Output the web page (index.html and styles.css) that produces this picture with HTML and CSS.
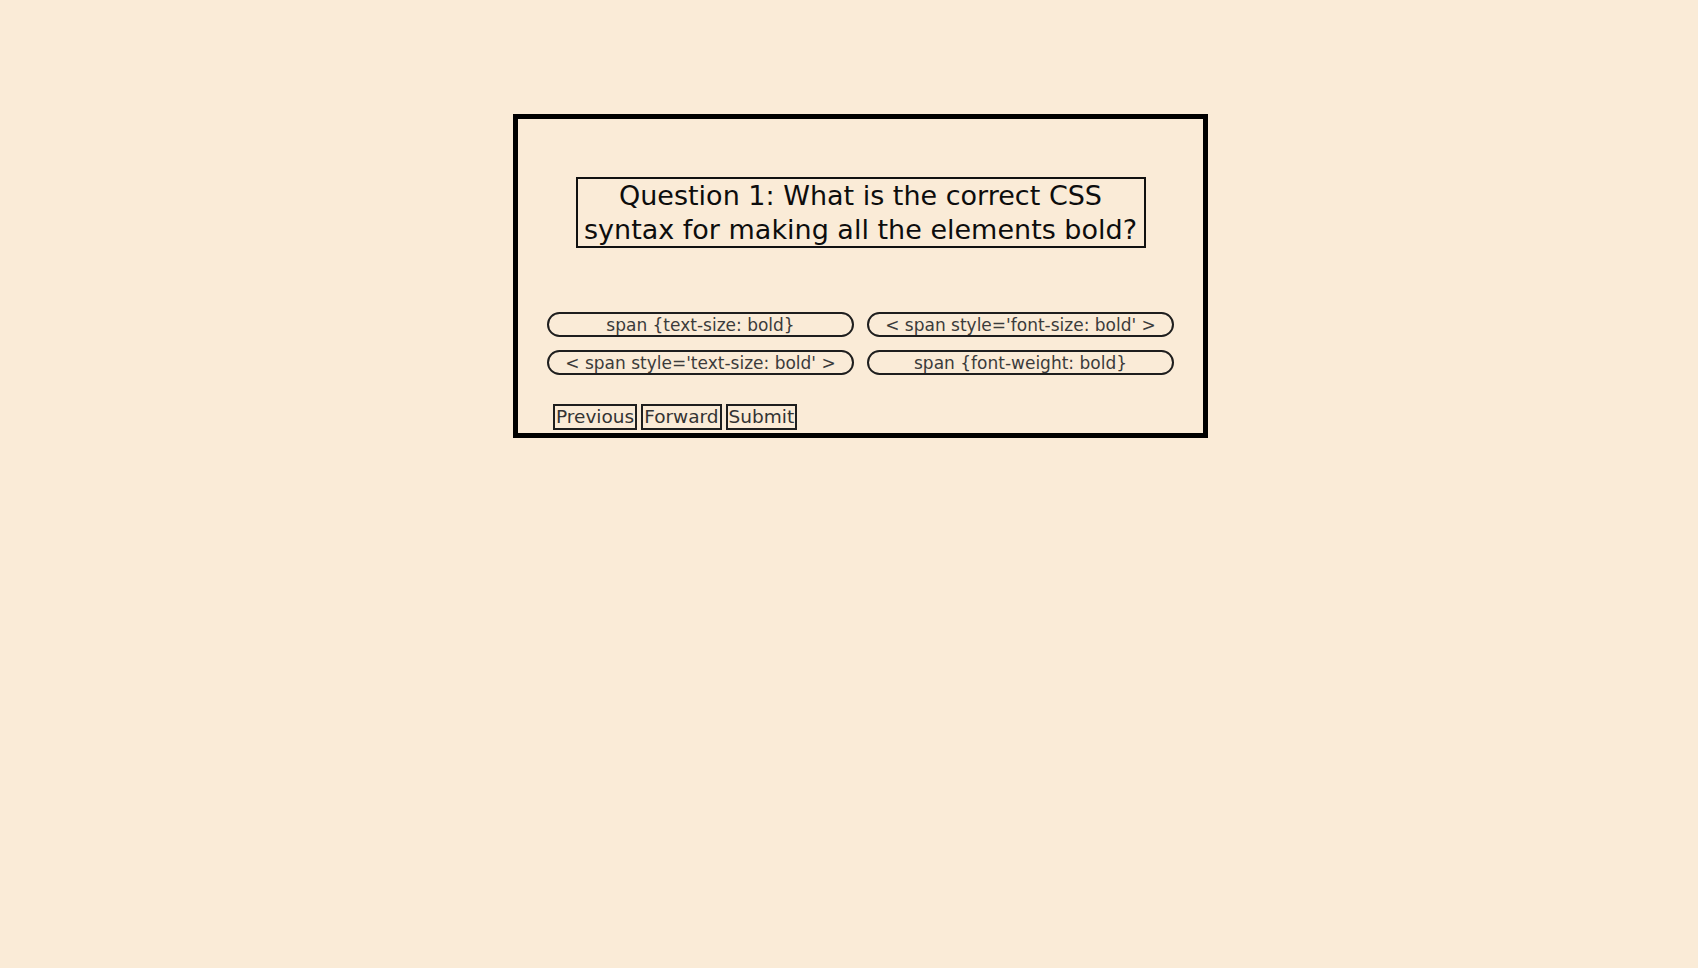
FILE: index.html
```html
<!DOCTYPE html>
<html lang="en">
<head>
<meta charset="utf-8">
<title>CSS Quiz</title>
<link rel="stylesheet" href="styles.css">
</head>
<body>
<div class="quiz">
  <h1 class="question">Question 1: What is the correct CSS<br>syntax for making all the elements bold?</h1>
  <div class="options">
    <button class="option">span {text-size: bold}</button>
    <button class="option">&lt; span style='font-size: bold' &gt;</button>
    <button class="option">&lt; span style='text-size: bold' &gt;</button>
    <button class="option">span {font-weight: bold}</button>
  </div>
  <div class="nav">
    <button class="nav-btn">Previous</button>
    <button class="nav-btn">Forward</button>
    <button class="nav-btn">Submit</button>
  </div>
</div>
</body>
</html>
```
FILE: styles.css
```css
html, body {
  margin: 0;
  padding: 0;
  background: #faebd7;
}
body {
  font-family: "DejaVu Sans", sans-serif;
}
.quiz {
  box-sizing: border-box;
  width: 695px;
  margin: 114px 0 0 513px;
  border: 5px solid #000;
  padding: 58px 0 3px 0;
  display: flex;
  flex-direction: column;
}
.question {
  box-sizing: border-box;
  width: 570px;
  margin: 0 auto;
  border: 2px solid #111;
  font-size: 27px;
  font-weight: 400;
  line-height: 33.5px;
  text-align: center;
  color: #0d0d0d;
  white-space: nowrap;
}
.options {
  margin: 64px 29px 0 29px;
  display: grid;
  grid-template-columns: 1fr 1fr;
  column-gap: 13px;
  row-gap: 13px;
}
.option {
  box-sizing: border-box;
  height: 25px;
  border: 2px solid #1e1e1e;
  border-radius: 13px;
  background: transparent;
  font-family: "DejaVu Sans", sans-serif;
  font-size: 17px;
  color: #3b3b3b;
  padding: 0;
  line-height: 20px;
}
.nav {
  margin: 29px 0 0 35px;
  display: flex;
  gap: 4px;
}
.nav-btn {
  box-sizing: border-box;
  height: 26px;
  border: 2px solid #1e1e1e;
  background: transparent;
  font-family: "DejaVu Sans", sans-serif;
  font-size: 18.5px;
  color: #333;
  padding: 0 1px;
  line-height: 22px;
}
```
